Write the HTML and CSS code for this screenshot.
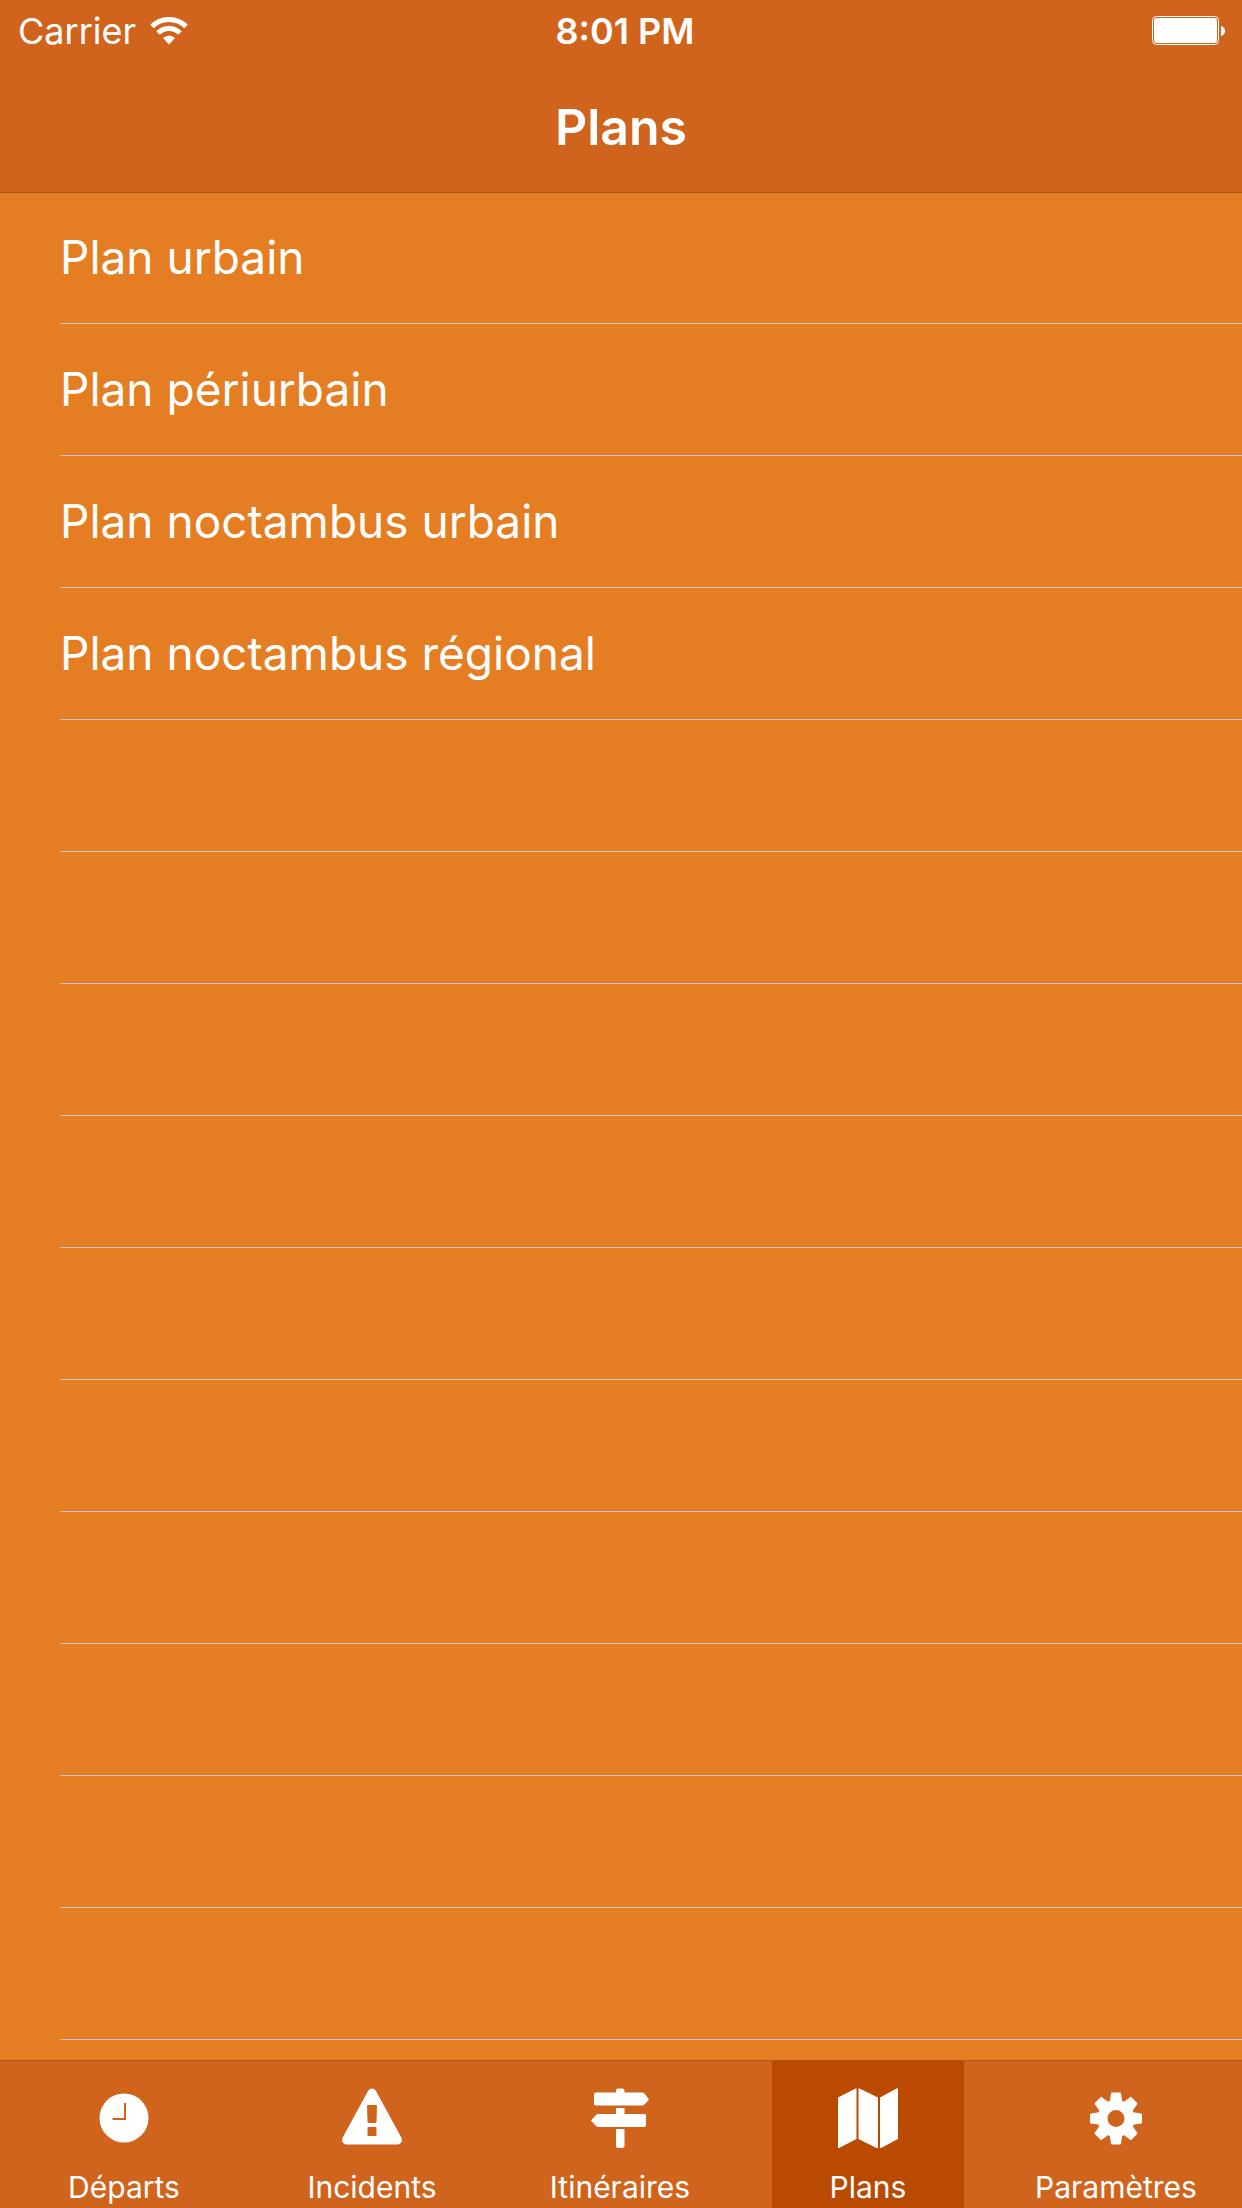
FILE: index.html
```html
<!DOCTYPE html>
<html lang="fr">
<head>
<meta charset="utf-8">
<meta name="viewport" content="width=device-width, initial-scale=1">
<title>Plans</title>
<link rel="stylesheet" href="styles.css">
</head>
<body>
<div class="app">
  <header class="header">
    <div class="status">
      <div class="carrier">
        <span>Carrier</span>
        <svg class="wifi" viewBox="0 0 38 28" aria-hidden="true">
          <path d="M2 9.500A24 24 0 0 1 36 9.500" fill="none" stroke="#fff" stroke-width="5"/>
          <path d="M8 16A15.500 15.500 0 0 1 30 16" fill="none" stroke="#fff" stroke-width="5"/>
          <path d="M13 21Q19 16 25 21L19 27.500Z" fill="#fff"/>
        </svg>
      </div>
      <time class="clock">8:01 PM</time>
      <svg class="battery" viewBox="0 0 74 30" aria-hidden="true">
        <rect x="0.500" y="0.500" width="66" height="28" rx="4" fill="none" stroke="#fff"/>
        <rect x="2" y="2" width="63" height="25" rx="3" fill="#fff"/>
        <path d="M69 10Q73 11 73 15T69 20Z" fill="#fff"/>
      </svg>
    </div>
    <h1 class="title">Plans</h1>
  </header>

  <main class="content">
    <ul class="list">
      <li class="row"><a class="row-link" href="#urbain">Plan urbain</a></li>
      <li class="row"><a class="row-link" href="#periurbain">Plan périurbain</a></li>
      <li class="row"><a class="row-link" href="#noctambus-urbain">Plan noctambus urbain</a></li>
      <li class="row"><a class="row-link" href="#noctambus-regional">Plan noctambus régional</a></li>
    </ul>
    <div class="empty-rows"></div>
  </main>

  <nav class="tabs">
    <a class="tab" href="#departs">
      <svg class="icon" viewBox="0 0 60 60" aria-hidden="true">
        <circle cx="30" cy="30" r="24.500" fill="#fff"/>
        <path d="M31 15V31H18.500" fill="none" stroke="#d0641c" stroke-width="2"/>
      </svg>
      <span>Départs</span>
    </a>
    <a class="tab" href="#incidents">
      <svg class="icon" viewBox="0 0 60 60" aria-hidden="true">
        <path fill="#fff" fill-rule="evenodd" d="M26.300 2.500Q30-1.500 33.700 2.500L59.300 49.500Q61.500 55 56 56.500H4Q-1.500 55 .7 49.500ZM26 17Q25 17 25 18L25.500 34Q25.600 35 26.500 35H33.500Q34.400 35 34.500 34L35 18Q35 17 34 17ZM26.500 39Q25.500 39 25.500 40V47Q25.500 48 26.500 48H33.500Q34.500 48 34.500 47V40Q34.500 39 33.500 39Z"/>
      </svg>
      <span>Incidents</span>
    </a>
    <a class="tab" href="#itineraires">
      <svg class="icon" viewBox="0 0 60 60" aria-hidden="true">
        <g fill="#fff">
          <path d="M6 4.500H26V2.500Q26 .5 28 .5H32.500Q34.500 .5 34.500 2.500V4.500H52Q53.500 4.500 54.500 5.500L59 11.500L54.500 16.500Q53.500 17.500 52 17.500H6Q4 17.500 4 15.500V6.500Q4 4.500 6 4.500Z"/>
          <path d="M26 20H34.500V26H54Q56 26 56 28V37Q56 39 54 39H8.500Q7 39 6 38L1 32.500L6 27Q7 26 8.500 26H26Z"/>
          <path d="M26 41H34.500V58Q34.500 60 32.500 60H28Q26 60 26 58Z"/>
        </g>
      </svg>
      <span>Itinéraires</span>
    </a>
    <a class="tab tab-active" href="#plans" aria-current="page">
      <svg class="icon" viewBox="0 0 60 60" aria-hidden="true">
        <path fill="#fff" d="M0 9.500L17.500 .5Q18.500 0 18.500 1V51L1 60H0ZM20.500 1Q20.500 0 21.500 .5L40 9.500V60H38.500L20.500 51ZM42 9.500L59 .3Q60 0 60 1V51L43 60H42Z"/>
      </svg>
      <span>Plans</span>
    </a>
    <a class="tab" href="#parametres">
      <svg class="icon" viewBox="0 0 60 60" aria-hidden="true">
        <defs>
          <path id="tooth" d="M23.500 15L25 5.500Q25.200 4.500 26 4.500H34Q34.800 4.500 35 5.500L36.500 15Z"/>
        </defs>
        <g fill="#fff">
          <use href="#tooth"/>
          <use href="#tooth" transform="rotate(45 30 30.500)"/>
          <use href="#tooth" transform="rotate(90 30 30.500)"/>
          <use href="#tooth" transform="rotate(135 30 30.500)"/>
          <use href="#tooth" transform="rotate(180 30 30.500)"/>
          <use href="#tooth" transform="rotate(225 30 30.500)"/>
          <use href="#tooth" transform="rotate(270 30 30.500)"/>
          <use href="#tooth" transform="rotate(315 30 30.500)"/>
        </g>
        <circle cx="30" cy="30.500" r="13.500" fill="none" stroke="#fff" stroke-width="10"/>
      </svg>
      <span>Paramètres</span>
    </a>
  </nav>
</div>
</body>
</html>
```
FILE: styles.css
```css
* {
  box-sizing: border-box;
}

body {
  margin: 0;
  background: #e57e22;
  color: #fff;
  font-family: Inter, "Liberation Sans", sans-serif;
}

a {
  color: inherit;
  text-decoration: none;
}

.app {
  display: flex;
  flex-direction: column;
  min-height: 100vh;
}

.header {
  height: 192px;
  background: #d0641c;
  box-shadow: 0 1px #a5591b;
  z-index: 1;
}

.status {
  display: grid;
  grid-template-columns: 1fr auto 1fr;
  align-items: center;
  height: 62px;
  padding: 0 10px 0 18px;
  font-size: 36px;
  line-height: 62px;
}

.carrier {
  display: flex;
  align-items: center;
  gap: 14px;
}

.wifi {
  width: 38px;
  height: 28px;
}

.clock {
  font-weight: 600;
}

.battery {
  width: 74px;
  height: 30px;
  margin-right: 6px;
  justify-self: end;
}

.title {
  margin: 0;
  font-size: 50px;
  font-weight: 600;
  line-height: 130px;
  text-align: center;
}

.content {
  display: flex;
  flex: 1;
  flex-direction: column;
  padding-left: 60px;
}

.list {
  margin: 0;
  padding: 0;
  list-style: none;
}

.row {
  border-bottom: 1px solid #c8c7cc;
}

.row-link {
  display: block;
  font-size: 46px;
  line-height: 131px;
}

.empty-rows {
  flex: 1;
  background: repeating-linear-gradient(transparent 0 131px, #c8c7cc 131px 132px);
}

.tabs {
  display: flex;
  justify-content: space-around;
  height: 147px;
  padding-right: 2px;
  background: #d0641c;
  box-shadow: 0 -1px #a5591b;
}

.tab {
  display: flex;
  flex-direction: column;
  align-items: center;
  gap: 20px;
  width: 192px;
  padding-top: 27px;
  font-size: 30px;
  line-height: 38px;
}

.tab-active {
  background: #ba4a00;
}

.icon {
  width: 60px;
  height: 60px;
}
```
